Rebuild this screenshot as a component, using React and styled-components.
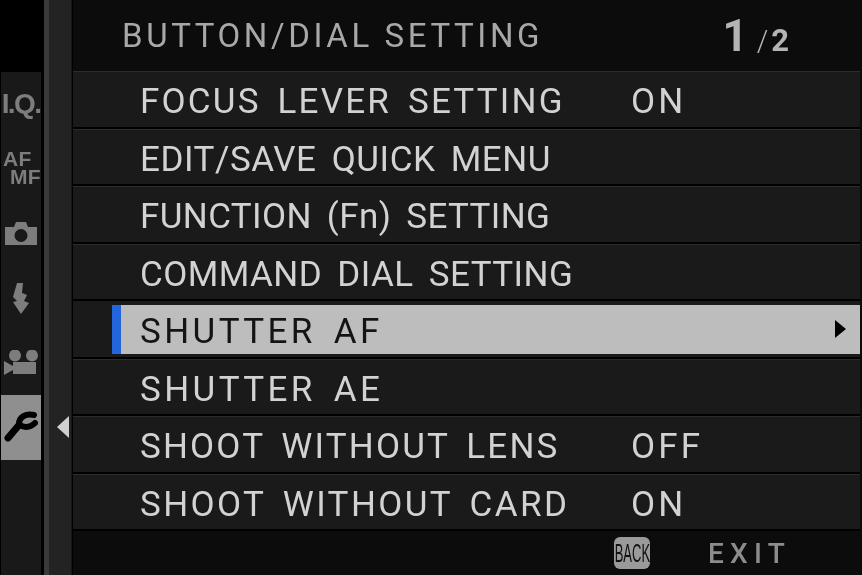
import React from "react";
import styled, { createGlobalStyle } from "styled-components";

const GlobalStyle = createGlobalStyle`
  html, body {
    margin: 0;
    background: #000;
  }
  * {
    box-sizing: border-box;
  }
`;

const Screen = styled.div`
  display: grid;
  grid-template-columns: 44px 5px 23px 1fr;
  width: 862px;
  height: 575px;
  overflow: hidden;
  background: #000;
  font-family: Roboto, "Liberation Sans", sans-serif;
  filter: blur(0.45px);
`;

const Sidebar = styled.div`
  display: flex;
  flex-direction: column;
  padding: 72px 3px 0 1px;
  background: #000;
`;

const Tab = styled.div`
  display: flex;
  align-items: center;
  justify-content: center;
  flex: none;
  height: 64.6px;
  background: ${({ $active }) => ($active ? "#8f8f8f" : "#191919")};
  color: #7d7d7d;
`;

const Filler = styled.div`
  flex: 1;
  background: #191919;
`;

const IqLabel = styled.span`
  font-family: "Liberation Sans", sans-serif;
  font-size: 28px;
  font-weight: 700;
  letter-spacing: -1.6px;
  margin-top: -1px;
`;

const AfMf = styled.span`
  display: flex;
  flex-direction: column;
  width: 38px;
  margin: -2px 0 0 2px;
  font-family: "Liberation Sans", sans-serif;
  font-size: 21px;
  font-weight: 700;
  line-height: 18px;
  letter-spacing: 0.3px;
`;

const MfLine = styled.span`
  align-self: flex-end;
`;

const Strip = styled.div`
  background: #3a3a3a;
`;

const Rail = styled.div`
  display: flex;
  flex-direction: column;
  align-items: center;
  padding: 416px 0 0 6px;
  background: #232323;
  border-right: 1px solid #161616;
`;

const Main = styled.div`
  display: flex;
  flex-direction: column;
  background: #0c0c0c;
  border-left: 1px solid #000;
`;

const Header = styled.div`
  display: flex;
  align-items: center;
  height: 71px;
  padding: 0 73px 0 49px;
  color: #a8a8a8;
`;

const Title = styled.div`
  flex: 1;
  font-size: 33px;
  letter-spacing: 3.6px;
`;

const Page = styled.div`
  display: flex;
  align-items: baseline;
  color: #b4b4b4;
  font-weight: 700;
`;

const PageNow = styled.span`
  font-size: 44px;
  margin-right: 9px;
`;

const PageSlash = styled.span`
  font-size: 29px;
  font-weight: 300;
  margin-right: 3px;
`;

const PageRest = styled.span`
  font-size: 31px;
`;

const Rows = styled.div`
  display: flex;
  flex-direction: column;
  margin-right: 2px;
`;

const Row = styled.div`
  display: flex;
  align-items: center;
  height: 57.5px;
  padding: 5px 20px 0 67px;
  background: #1a1a1a;
  border-top: 1px solid #2c2c2c;
  border-bottom: 2px solid #000;
  color: #d2d2d2;
  font-size: 35px;
  word-spacing: 6px;
`;

const SelectedRow = styled.div`
  display: flex;
  align-items: stretch;
  height: 57.5px;
  padding: 4px 0 3px 39px;
  background: #1a1a1a;
  border-bottom: 2px solid #000;
  font-size: 35px;
  word-spacing: 6px;
`;

const Highlight = styled.div`
  display: flex;
  flex: 1;
  align-items: center;
  padding: 4px 20px 0 19px;
  border-left: 9px solid #2266dd;
  background: #bdbdbd;
  color: #141414;
`;

const Label = styled.span`
  width: 491px;
  flex: none;
  white-space: nowrap;
  letter-spacing: ${({ $track }) => $track}px;
`;

const Value = styled.span`
  white-space: nowrap;
  letter-spacing: 3.1px;
`;

const Arrow = styled.div`
  margin-left: auto;
  margin-right: -6px;
  margin-top: -4px;
  width: 0;
  height: 0;
  border-top: 9px solid transparent;
  border-bottom: 9px solid transparent;
  border-left: 11px solid #000;
`;

const Footer = styled.div`
  display: flex;
  flex: 1;
  align-items: center;
  padding: 0 0 0 541px;
  color: #8c8c8c;
`;

const BackKey = styled.span`
  display: flex;
  align-items: center;
  justify-content: center;
  width: 36px;
  height: 32px;
  border-radius: 6px;
  background: #9a9a9a;
  color: #111;
  font-family: "Liberation Sans", sans-serif;
  font-size: 26px;
  overflow: hidden;
`;

const BackText = styled.span`
  display: inline-block;
  transform: scaleX(0.5);
`;

const ExitText = styled.span`
  margin-left: 58px;
  font-size: 28px;
  font-weight: 500;
  letter-spacing: 6.2px;
`;

const CameraIcon = () => (
  <svg width="34" height="24" viewBox="0 0 34 24">
    <path
      fill="currentColor"
      fillRule="evenodd"
      d="M1 6h9l2-5h10l2 5h9v18H1zM17 8a6.5 6.5 0 1 0 0 13a6.5 6.5 0 1 0 0-13z"
    />
  </svg>
);

const FlashIcon = () => (
  <svg width="20" height="32" viewBox="0 0 20 32">
    <path
      fill="currentColor"
      d="M6 1h6l-1 10 5 2-3 6 5 2-8 11-8-12 4-1-4-4z"
    />
  </svg>
);

const VideoIcon = () => (
  <svg width="36" height="26" viewBox="0 0 36 26">
    <g fill="currentColor">
      <circle cx="12" cy="5.5" r="6" />
      <circle cx="29" cy="5.5" r="6" />
      <rect x="10" y="12" width="23" height="12" />
      <path d="M1 11l9 5v4l-9 5z" />
    </g>
  </svg>
);

const WrenchIcon = () => (
  <svg width="34" height="32" viewBox="0 0 34 32">
    <path
      fill="none"
      stroke="#000"
      strokeWidth="7"
      strokeLinecap="round"
      d="M4 27 15 14"
    />
    <path
      fill="none"
      stroke="#000"
      strokeWidth="6"
      strokeLinecap="round"
      d="M30 4C22 2 15 6 15 13C20 18 27 16 31 12"
    />
  </svg>
);

const LeftArrow = styled.div`
  width: 0;
  height: 0;
  border-top: 11px solid transparent;
  border-bottom: 11px solid transparent;
  border-right: 12px solid #cfcfcf;
`;

const items = [
  { label: "FOCUS LEVER SETTING", value: "ON", track: 2.2 },
  { label: "EDIT/SAVE QUICK MENU", track: 0.55 },
  { label: "FUNCTION (Fn) SETTING", track: 0.38 },
  { label: "COMMAND DIAL SETTING", track: 0.45 },
  { label: "SHUTTER AF", selected: true, track: 3.4 },
  { label: "SHUTTER AE", track: 3.4 },
  { label: "SHOOT WITHOUT LENS", value: "OFF", track: 2.17 },
  { label: "SHOOT WITHOUT CARD", value: "ON", track: 2.4 },
];

export default function App() {
  return (
    <>
      <GlobalStyle />
      <Screen>
        <Sidebar>
          <Tab><IqLabel>I.Q.</IqLabel></Tab>
          <Tab>
            <AfMf>
              <span>AF</span>
              <MfLine>MF</MfLine>
            </AfMf>
          </Tab>
          <Tab><CameraIcon /></Tab>
          <Tab><FlashIcon /></Tab>
          <Tab><VideoIcon /></Tab>
          <Tab $active><WrenchIcon /></Tab>
          <Filler />
        </Sidebar>
        <Strip />
        <Rail>
          <LeftArrow />
        </Rail>
        <Main>
          <Header>
            <Title>BUTTON/DIAL SETTING</Title>
            <Page>
              <PageNow>1</PageNow>
              <PageSlash>/</PageSlash>
              <PageRest>2</PageRest>
            </Page>
          </Header>
          <Rows>
            {items.map((item) =>
              item.selected ? (
                <SelectedRow key={item.label}>
                  <Highlight>
                    <Label $track={item.track}>{item.label}</Label>
                    <Arrow />
                  </Highlight>
                </SelectedRow>
              ) : (
                <Row key={item.label}>
                  <Label $track={item.track}>{item.label}</Label>
                  {item.value && <Value>{item.value}</Value>}
                </Row>
              )
            )}
          </Rows>
          <Footer>
            <BackKey><BackText>BACK</BackText></BackKey>
            <ExitText>EXIT</ExitText>
          </Footer>
        </Main>
      </Screen>
    </>
  );
}
